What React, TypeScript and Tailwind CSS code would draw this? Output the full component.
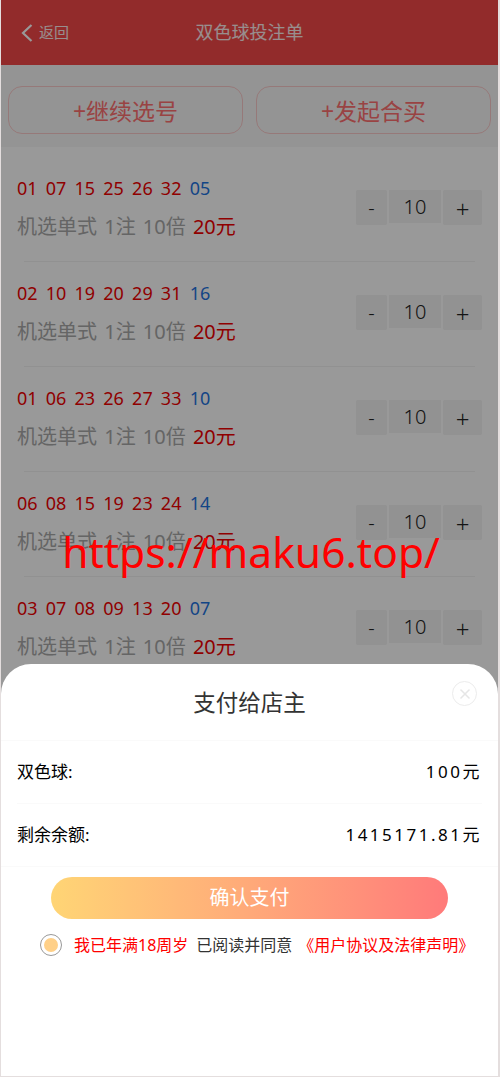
import { X } from "lucide-react"

const font = { fontFamily: '"Noto Sans", "Noto Sans CJK SC", sans-serif' }

const App = () => {
  const bets = [
    { red: "01 07 15 25 26 32", blue: "05" },
    { red: "02 10 19 20 29 31", blue: "16" },
    { red: "01 06 23 26 27 33", blue: "10" },
    { red: "06 08 15 19 23 24", blue: "14" },
    { red: "03 07 08 09 13 20", blue: "07" },
  ]

  return (
    <div className="relative w-[500px] h-[1077px] overflow-hidden bg-[#e4dede] pr-[2px] pl-[1px] pb-[1px]" style={font}>
      <div className="relative h-full overflow-hidden bg-white">
        <div className="h-[65px] bg-[#f34848] flex items-center relative">
          <div className="flex items-center pl-[20px] text-white/90">
            <svg width="12" height="18" viewBox="0 0 12 18" fill="none" stroke="#fff" strokeWidth="2.2">
              <path d="M10.5 1 L2 9 L10.5 17" />
            </svg>
            <span className="text-[15px] ml-[6px]">返回</span>
          </div>
          <span className="absolute left-0 right-0 text-center text-[18px] text-white/90">双色球投注单</span>
        </div>

        <div className="h-[82px] bg-[#f7f7f7] flex gap-[13px] px-[7px] pt-[21px]">
          {["+继续选号", "+发起合买"].map((t, i) => (
            <div key={i} className="w-[235px] h-[48px] pt-[3px] rounded-[14px] border border-[#fbcaca] flex items-center justify-center text-[23px] text-[#ff7070]">
              {t}
            </div>
          ))}
        </div>

        <div className="pt-[10px]">
          {bets.map((b, i) => (
            <div key={i} className="h-[105px] flex flex-col px-[16px]">
              <div className="flex-1 flex items-center justify-between">
                <div className="flex flex-col gap-[11px] -mt-[2px]">
                  <div className="text-[18px] leading-[26px] whitespace-nowrap [word-spacing:3.5px]">
                    <span className="text-[#f00000]">{b.red}</span> <span className="text-[#1f74e0]">{b.blue}</span>
                  </div>
                  <div className="text-[20px] leading-[30px] text-[#a8a8a8] whitespace-nowrap [word-spacing:2px]">
                    机选单式 1注 10倍 <span className="text-[#f00000]">20元</span>
                  </div>
                </div>
                <div className="flex gap-[2px] items-start text-[#222] -mt-[3px]">
                  <div className="w-[31px] h-[35px] bg-[#f3f3f3] rounded-[2px] flex items-center justify-center text-[20px] font-light">-</div>
                  <div className="w-[52px] h-[33px] bg-[#f3f3f3] flex items-center justify-center text-[20px] font-light">10</div>
                  <div className="w-[39px] h-[35px] bg-[#f3f3f3] rounded-[2px] pt-[2px] flex items-center justify-center text-[24px] font-light">+</div>
                </div>
              </div>
              <div className="h-px mx-[7px] bg-[#f2f2f2]" />
            </div>
          ))}
        </div>

        <div className="absolute inset-0 bg-black/40" />

        <div className="absolute inset-x-0 top-[524px] text-center pl-[3px] text-[42.5px] leading-[56px] text-[#ff0000]">
          https://maku6.top/
        </div>

        <div className="absolute inset-x-0 top-[664px] bottom-0 bg-white rounded-t-[30px]">
          <div className="h-[77px] pt-[2px] border-b border-[#fafafa] flex items-center justify-center text-[22.5px] text-[#333]">
            支付给店主
            <div className="absolute right-[21px] top-[17px] w-[25px] h-[25px] rounded-full border border-[#ececec] flex items-center justify-center">
              <X size={16} strokeWidth={2.4} className="text-[#e6e6e6]" />
            </div>
          </div>
          <div className="mx-[16px] h-[63px] border-b border-[#fafafa] flex items-center justify-between text-[17px] text-black">
            <span>双色球:</span>
            <span className="tracking-[2.5px]">100元</span>
          </div>
          <div className="h-[63px] px-[16px] border-b border-[#fafafa] flex items-center justify-between text-[17px] text-black">
            <span>剩余余额:</span>
            <span className="tracking-[2.5px]">1415171.81元</span>
          </div>
          <div className="mt-[10px] mx-[50px] h-[42px] rounded-full bg-gradient-to-r from-[#ffd575] to-[#ff7a7a] flex items-center justify-center text-[20px] text-white">
            确认支付
          </div>
          <div className="mt-[14px] pl-[39px] flex items-center text-[16px] whitespace-nowrap">
            <div className="w-[22px] h-[22px] rounded-full border border-[#999] flex items-center justify-center mr-[12px]">
              <div className="w-[14px] h-[14px] rounded-full bg-[#ffd088]" />
            </div>
            <span className="text-[#ff0000]">我已年满18周岁</span>
            <span className="text-[#333] ml-[8px]">已阅读并同意</span>
            <span className="text-[#ff0000] ml-[6px]">《用户协议及法律声明》</span>
          </div>
        </div>
      </div>
    </div>
  )
}

export default App
